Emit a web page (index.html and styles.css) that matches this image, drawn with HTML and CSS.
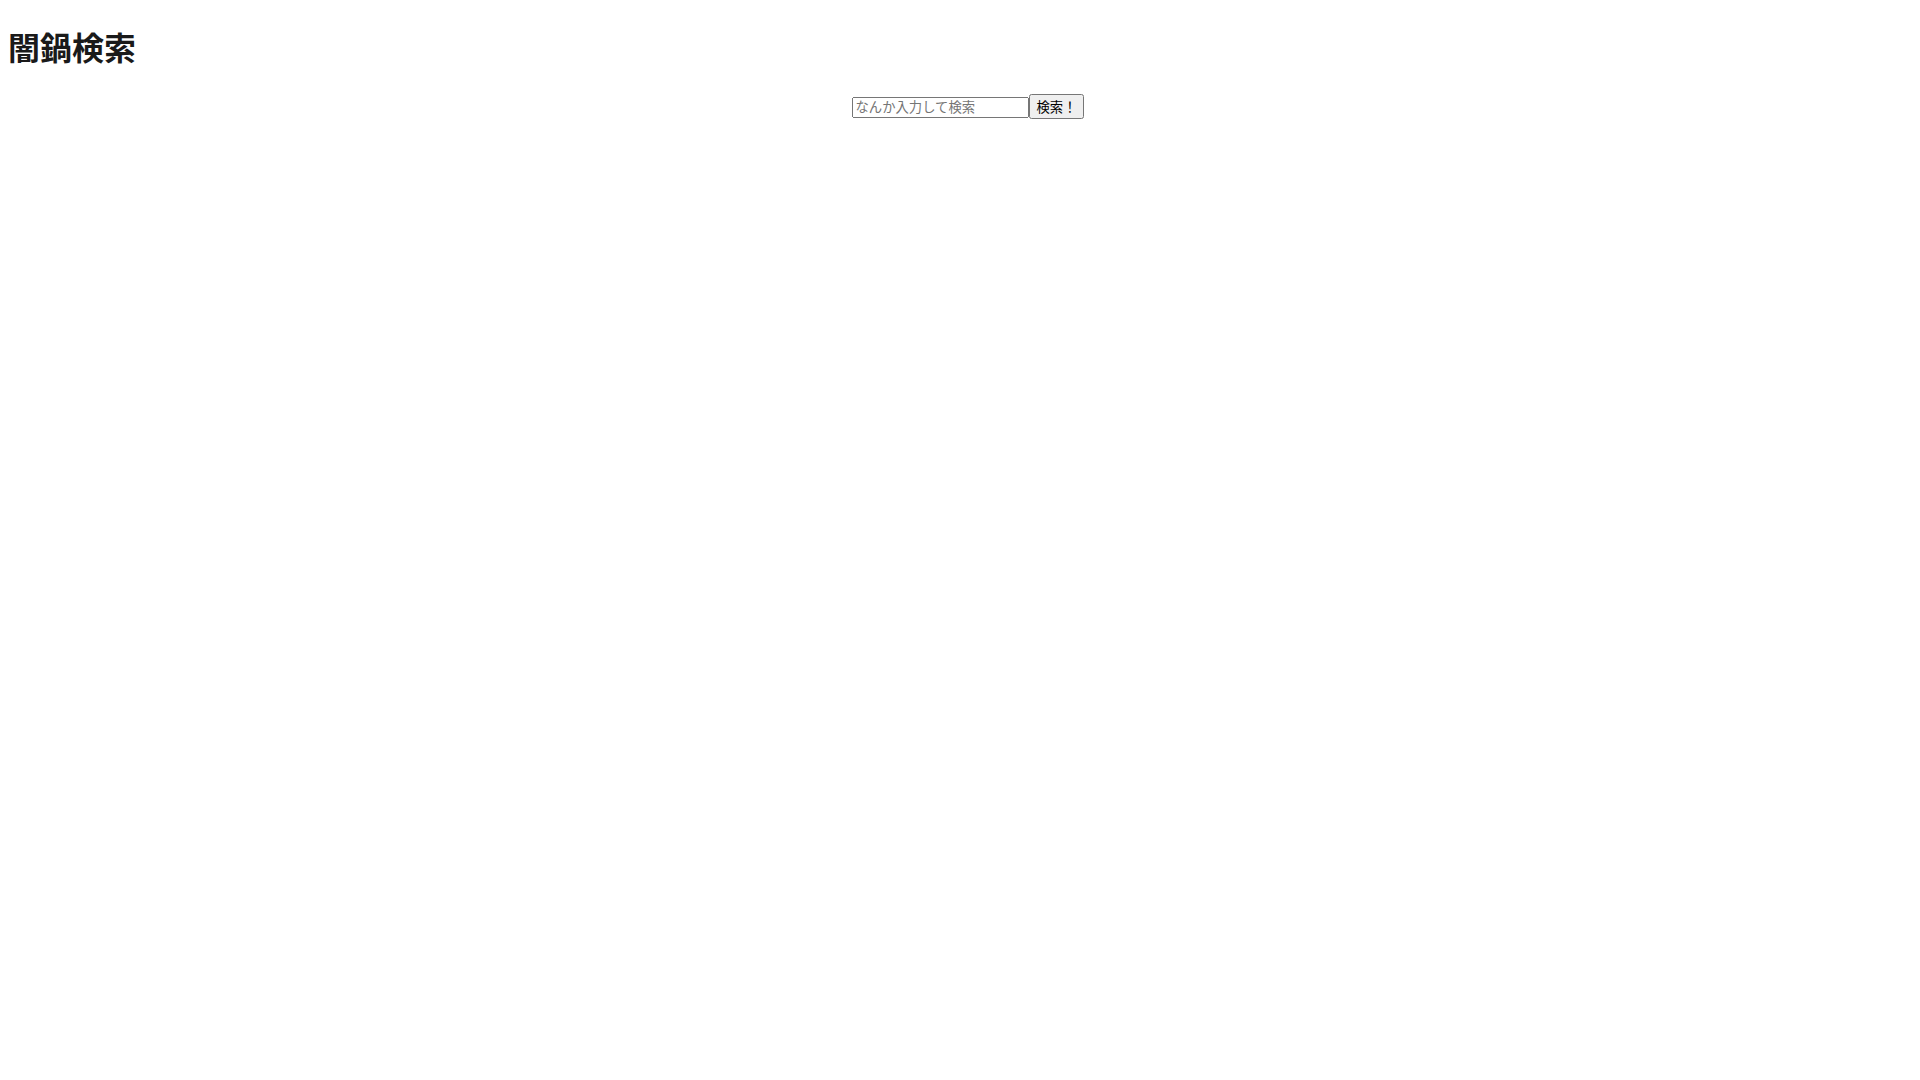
FILE: index.html
```html
<!DOCTYPE html>
<html lang="ja">
<head>
<meta charset="utf-8">
<title>闇鍋検索</title>
<link rel="stylesheet" href="styles.css">
</head>
<body>
<h1 class="title">闇鍋検索</h1>
<form class="search">
<input class="search-input" type="text" placeholder="なんか入力して検索"><button class="search-button" type="submit">検索！</button>
</form>
</body>
</html>
```

FILE: styles.css
```css
body {
  font-family: "Liberation Serif", "Noto Sans CJK JP", serif;
}
.title {
  font-family: "Liberation Sans", "Noto Sans CJK JP", sans-serif;
  line-height: 41px;
  margin-bottom: 24px;
  color: #1a1a1a;
}
.search {
  text-align: center;
  padding-left: 16px;
  white-space: nowrap;
}
.search-input,
.search-button {
  font-family: "Liberation Sans", "Noto Sans CJK JP", sans-serif;
}
.search-input {
  width: 177px;
  box-sizing: border-box;
}
.search-button {
  white-space: nowrap;
}
```
